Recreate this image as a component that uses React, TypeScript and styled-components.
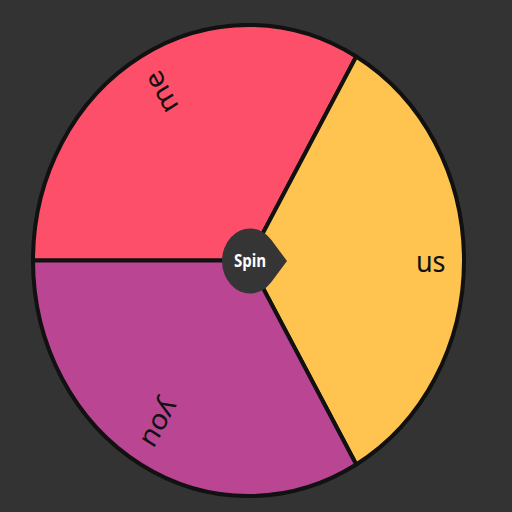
import { createGlobalStyle, styled } from 'styled-components';

type Slice = { label: string; color: string; from: number; to: number };

const slices: Slice[] = [
  { label: 'me', color: '#fe4f6a', from: 180, to: 300 },
  { label: 'us', color: '#fec44f', from: 300, to: 420 },
  { label: 'you', color: '#b94593', from: 420, to: 540 },
];

const R = 215.5;

function point(angle: number): string {
  const rad = (angle * Math.PI) / 180;
  return `${(R * Math.cos(rad)).toFixed(2)} ${(R * Math.sin(rad)).toFixed(2)}`;
}

export default function App(): JSX.Element {
  return (
    <>
      <GlobalStyle />
      <Page>
        <WheelWrap>
          <svg width={437} height={475} viewBox="0 0 437 475">
            <g transform="translate(218.5 237.5) scale(1 1.093)">
              {slices.map((slice: Slice) => (
                <path
                  key={slice.label}
                  d={`M0 0 L${point(slice.from)} A${R} ${R} 0 0 1 ${point(slice.to)} Z`}
                  fill={slice.color}
                  stroke="#111"
                  strokeWidth={4}
                  strokeLinejoin="round"
                  vectorEffect="non-scaling-stroke"
                />
              ))}
              {slices.map((slice: Slice) => (
                <Label
                  key={`t-${slice.label}`}
                  x={197}
                  y={0}
                  transform={`rotate(${(slice.from + slice.to) / 2})`}
                  textAnchor="end"
                  dominantBaseline="central"
                >
                  {slice.label}
                </Label>
              ))}
            </g>
          </svg>
          <SpinButton type="button">
            <svg width={70} height={70} viewBox="0 0 70 70">
              <g transform="translate(28 35) scale(1 1.16)">
                <path
                  d="M21.2 -18.3 L37 0 L21.2 18.3 A28 28 0 1 1 21.2 -18.3 Z"
                  fill="#353535"
                  strokeLinejoin="round"
                />
                <SpinText x={0} y={0} textAnchor="middle" dominantBaseline="central">
                  Spin
                </SpinText>
              </g>
            </svg>
          </SpinButton>
        </WheelWrap>
      </Page>
    </>
  );
}

const GlobalStyle = createGlobalStyle`
  html, body {
    margin: 0;
    background: #333333;
  }
`;

const Page = styled.main`
  width: 512px;
  height: 512px;
  box-sizing: border-box;
  padding: 23px 0 0 30px;
  background: #333333;
`;

const WheelWrap = styled.div`
  position: relative;
  width: 437px;
  height: 475px;

  svg {
    display: block;
  }
`;

const Label = styled.text`
  font-family: 'Noto Sans', sans-serif;
  font-size: 27px;
  fill: #111111;
`;

const SpinButton = styled.button`
  position: absolute;
  left: 191.5px;
  top: 202.5px;
  padding: 0;
  border: none;
  background: transparent;
  cursor: pointer;
`;

const SpinText = styled.text`
  font-family: 'Open Sans', sans-serif;
  font-size: 15px;
  font-weight: 700;
  fill: #ffffff;
`;
